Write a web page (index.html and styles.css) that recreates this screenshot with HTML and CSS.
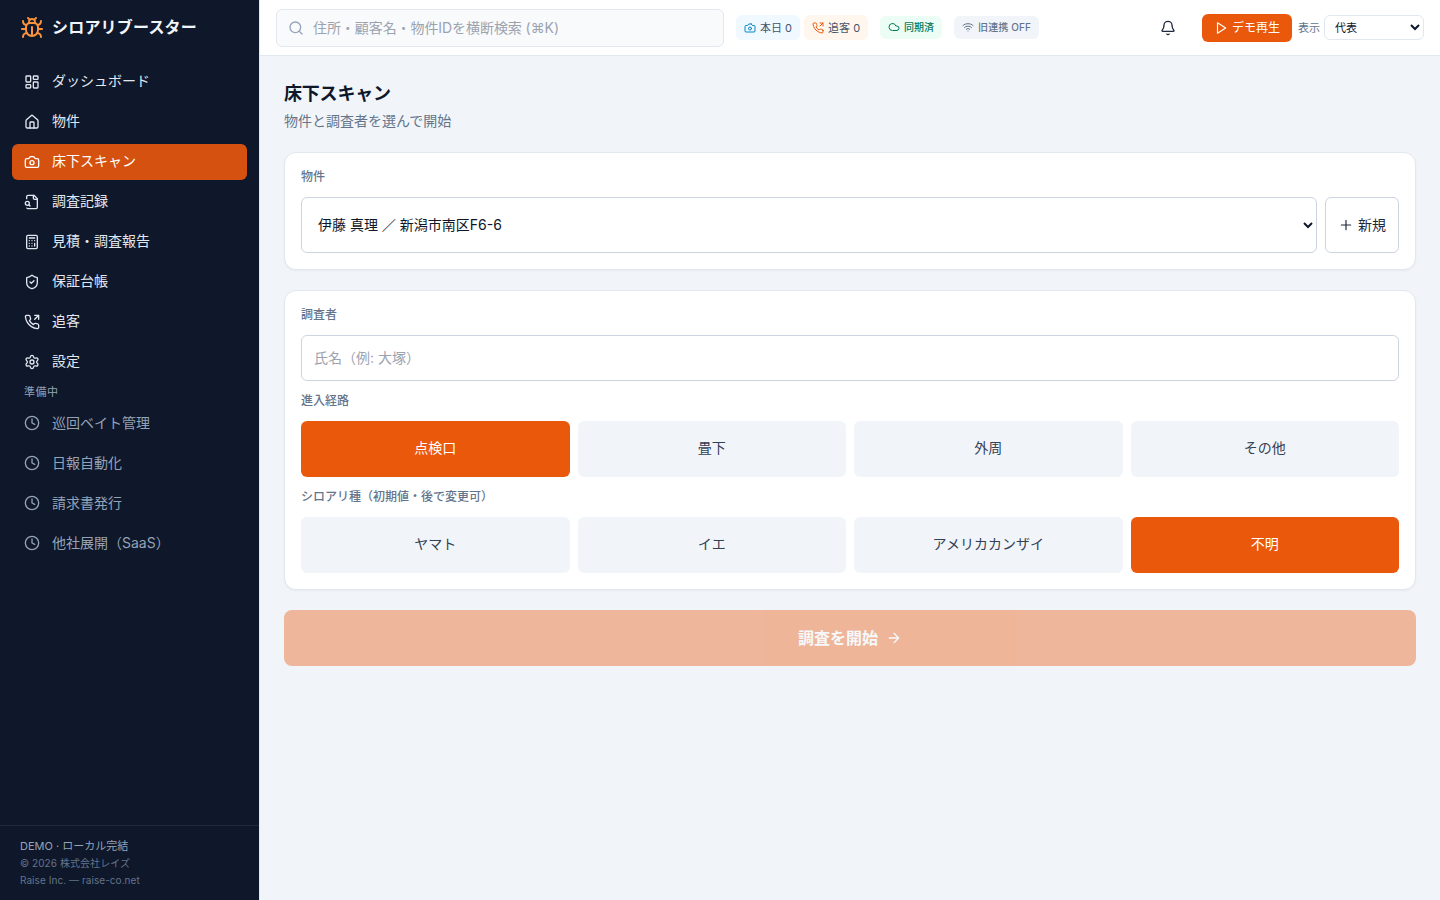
FILE: index.html
```html
<!DOCTYPE html>
<html lang="ja">
<head>
    <meta charset="UTF-8">
    <meta name="viewport" content="width=device-width, initial-scale=1">
    <title>シロアリブースター</title>
    <link rel="stylesheet" href="styles.css">
</head>
<body>
    <!-- shared icons -->
    <svg class="sprite" width="0" height="0">
        <symbol id="i-camera" viewBox="0 0 24 24"><path d="M14.5 4h-5L7 7H4a2 2 0 0 0-2 2v9a2 2 0 0 0 2 2h16a2 2 0 0 0 2-2V9a2 2 0 0 0-2-2h-3l-2.5-3z"/><circle cx="12" cy="13" r="3"/></symbol>
        <symbol id="i-phone" viewBox="0 0 24 24"><path d="M22 8V2h-6M16 8l6-6"/><path d="M22 16.92v3a2 2 0 0 1-2.18 2 19.79 19.79 0 0 1-8.63-3.07 19.5 19.5 0 0 1-6-6 19.79 19.79 0 0 1-3.07-8.67A2 2 0 0 1 4.11 2h3a2 2 0 0 1 2 1.72 12.84 12.84 0 0 0 .7 2.81 2 2 0 0 1-.45 2.11L8.09 9.91a16 16 0 0 0 6 6l1.27-1.27a2 2 0 0 1 2.11-.45 12.84 12.84 0 0 0 2.81.7A2 2 0 0 1 22 16.92z"/></symbol>
        <symbol id="i-clock" viewBox="0 0 24 24"><circle cx="12" cy="12" r="10"/><path d="M12 6v6l4 2"/></symbol>
    </svg>

    <div class="app">
        <aside class="sidebar">
            <div class="brand">
                <svg class="icon brand-icon" viewBox="0 0 24 24"><path d="m8 2 1.88 1.88M14.12 3.88 16 2M9 7.13v-1a3.003 3.003 0 1 1 6 0v1"/><path d="M12 20c-3.3 0-6-2.7-6-6v-3a4 4 0 0 1 4-4h4a4 4 0 0 1 4 4v3c0 3.3-2.7 6-6 6M12 20v-9"/><path d="M6.53 9C4.6 8.8 3 7.1 3 5M6 13H2M3 21c0-2.1 1.7-3.9 3.8-4M20.97 5c0 2.1-1.6 3.8-3.5 4M22 13h-4M17.2 17c2.1.1 3.8 1.9 3.8 4"/></svg>
                <span>シロアリブースター</span>
            </div>
            <nav class="nav nav-main">
                <a class="nav-item" href="#">
                    <svg class="icon" viewBox="0 0 24 24"><rect x="3" y="3" width="7" height="9" rx="1"/><rect x="14" y="3" width="7" height="5" rx="1"/><rect x="14" y="12" width="7" height="9" rx="1"/><rect x="3" y="16" width="7" height="5" rx="1"/></svg>
                    <span>ダッシュボード</span>
                </a>
                <a class="nav-item" href="#">
                    <svg class="icon" viewBox="0 0 24 24"><path d="M15 21v-8a1 1 0 0 0-1-1h-4a1 1 0 0 0-1 1v8"/><path d="M3 10a2 2 0 0 1 .709-1.528l7-6a2 2 0 0 1 2.582 0l7 6A2 2 0 0 1 21 10v9a2 2 0 0 1-2 2H5a2 2 0 0 1-2-2z"/></svg>
                    <span>物件</span>
                </a>
                <a class="nav-item active" href="#">
                    <svg class="icon"><use href="#i-camera"/></svg>
                    <span>床下スキャン</span>
                </a>
                <a class="nav-item" href="#">
                    <svg class="icon" viewBox="0 0 24 24"><path d="M14 2v4a2 2 0 0 0 2 2h4"/><path d="M4.268 21a2 2 0 0 0 1.727 1H18a2 2 0 0 0 2-2V7l-5-5H6a2 2 0 0 0-2 2v3"/><path d="m9 18-1.5-1.5"/><circle cx="5" cy="14" r="3"/></svg>
                    <span>調査記録</span>
                </a>
                <a class="nav-item" href="#">
                    <svg class="icon" viewBox="0 0 24 24"><rect x="4" y="2" width="16" height="20" rx="2"/><path d="M8 6h8M16 14v4M16 10h.01M12 10h.01M8 10h.01M12 14h.01M8 14h.01M12 18h.01M8 18h.01"/></svg>
                    <span>見積・調査報告</span>
                </a>
                <a class="nav-item" href="#">
                    <svg class="icon" viewBox="0 0 24 24"><path d="M20 13c0 5-3.5 7.5-7.66 8.95a1 1 0 0 1-.67-.01C7.5 20.5 4 18 4 13V6a1 1 0 0 1 1-1c2 0 4.5-1.2 6.24-2.72a1.17 1.17 0 0 1 1.52 0C14.51 3.81 17 5 19 5a1 1 0 0 1 1 1z"/><path d="m9 12 2 2 4-4"/></svg>
                    <span>保証台帳</span>
                </a>
                <a class="nav-item" href="#">
                    <svg class="icon"><use href="#i-phone"/></svg>
                    <span>追客</span>
                </a>
                <a class="nav-item" href="#">
                    <svg class="icon" viewBox="0 0 24 24"><path d="M9.671 4.136a2.34 2.34 0 0 1 4.659 0 2.34 2.34 0 0 0 3.319 1.915 2.34 2.34 0 0 1 2.33 4.033 2.34 2.34 0 0 0 0 3.831 2.34 2.34 0 0 1-2.33 4.033 2.34 2.34 0 0 0-3.319 1.915 2.34 2.34 0 0 1-4.659 0 2.34 2.34 0 0 0-3.32-1.915 2.34 2.34 0 0 1-2.33-4.033 2.34 2.34 0 0 0 0-3.831A2.34 2.34 0 0 1 6.35 6.051a2.34 2.34 0 0 0 3.319-1.915"/><circle cx="12" cy="12" r="3"/></svg>
                    <span>設定</span>
                </a>
            </nav>
            <div class="nav-label">準備中</div>
            <nav class="nav nav-soon">
                <a class="nav-item"><svg class="icon"><use href="#i-clock"/></svg><span>巡回ベイト管理</span></a>
                <a class="nav-item"><svg class="icon"><use href="#i-clock"/></svg><span>日報自動化</span></a>
                <a class="nav-item"><svg class="icon"><use href="#i-clock"/></svg><span>請求書発行</span></a>
                <a class="nav-item"><svg class="icon"><use href="#i-clock"/></svg><span>他社展開（SaaS）</span></a>
            </nav>
            <div class="sidebar-footer">
                <p class="mode">DEMO · ローカル完結</p>
                <p>© 2026 株式会社レイズ</p>
                <p>Raise Inc. — raise-co.net</p>
            </div>
        </aside>

        <div class="page">
            <header class="topbar">
                <label class="search">
                    <svg class="icon" viewBox="0 0 24 24"><circle cx="11" cy="11" r="8"/><path d="m21 21-4.3-4.3"/></svg>
                    <input type="text" placeholder="住所・顧客名・物件IDを横断検索 (⌘K)">
                </label>
                <div class="chips">
                    <span class="chip chip-today"><svg class="icon"><use href="#i-camera"/></svg>本日 0</span>
                    <span class="chip chip-follow"><svg class="icon"><use href="#i-phone"/></svg>追客 0</span>
                </div>
                <span class="chip chip-small chip-sync"><svg class="icon" viewBox="0 0 24 24"><path d="M17.5 19H9a7 7 0 1 1 6.71-9h1.79a4.5 4.5 0 1 1 0 9Z"/></svg>同期済</span>
                <span class="chip chip-small chip-off"><svg class="icon" viewBox="0 0 24 24"><path d="M12 20h.01M2 8.82a15 15 0 0 1 20 0M5 12.859a10 10 0 0 1 14 0M8.5 16.429a5 5 0 0 1 7 0"/></svg>旧連携 OFF</span>
                <div class="topbar-right">
                    <button class="bell" aria-label="通知">
                        <svg class="icon" viewBox="0 0 24 24"><path d="M10.268 21a2 2 0 0 0 3.464 0"/><path d="M3.262 15.326A1 1 0 0 0 4 17h16a1 1 0 0 0 .74-1.673C19.41 13.956 18 12.499 18 8A6 6 0 0 0 6 8c0 4.499-1.411 5.956-2.738 7.326"/></svg>
                    </button>
                    <button class="demo">
                        <svg class="icon" viewBox="0 0 24 24"><path d="m6 3 14 9-14 9z"/></svg>デモ再生
                    </button>
                    <label class="role">表示
                        <select><option>代表</option></select>
                    </label>
                </div>
            </header>

            <main class="content">
                <div class="heading">
                    <h1>床下スキャン</h1>
                    <p>物件と調査者を選んで開始</p>
                </div>

                <section class="card">
                    <div class="field-label">物件</div>
                    <div class="property-row">
                        <select class="property"><option>伊藤 真理 ／ 新潟市南区F6-6</option></select>
                        <button class="add">
                            <svg class="icon" viewBox="0 0 24 24"><path d="M5 12h14M12 5v14"/></svg>新規
                        </button>
                    </div>
                </section>

                <section class="card">
                    <div class="field-label">調査者</div>
                    <input class="name" type="text" placeholder="氏名（例: 大塚）">
                    <div class="field-label">進入経路</div>
                    <div class="options">
                        <button class="option selected">点検口</button>
                        <button class="option">畳下</button>
                        <button class="option">外周</button>
                        <button class="option">その他</button>
                    </div>
                    <div class="field-label">シロアリ種（初期値・後で変更可）</div>
                    <div class="options">
                        <button class="option">ヤマト</button>
                        <button class="option">イエ</button>
                        <button class="option">アメリカカンザイ</button>
                        <button class="option selected">不明</button>
                    </div>
                </section>

                <button class="start" disabled>
                    調査を開始
                    <svg class="icon" viewBox="0 0 24 24"><path d="M5 12h14M12 5l7 7-7 7"/></svg>
                </button>
            </main>
        </div>
    </div>
</body>
</html>
```
FILE: styles.css
```css
* {
    box-sizing: border-box;
}
body {
    margin: 0;
    font-family: Inter, "Noto Sans CJK JP", sans-serif;
    font-size: 14px;
    line-height: 20px;
    color: #0f172a;
    background: #f1f5f9;
}
button, input, select {
    font: inherit;
    color: inherit;
    margin: 0;
}
button {
    border: none;
    background: none;
    padding: 0;
    cursor: pointer;
}
h1, p {
    margin: 0;
}
.sprite {
    display: none;
}
.icon {
    width: 16px;
    height: 16px;
    flex-shrink: 0;
    fill: none;
    stroke: currentColor;
    stroke-width: 2;
    stroke-linecap: round;
    stroke-linejoin: round;
}
.app {
    display: flex;
    height: 100vh;
}

/* Sidebar */
.sidebar {
    width: 260px;
    flex-shrink: 0;
    display: flex;
    flex-direction: column;
    background: #0f172a;
    background-clip: padding-box;
    border-right: 1px solid #e2e8f0;
    color: #e2e8f0;
}
.brand {
    height: 56px;
    padding: 0 20px;
    display: flex;
    align-items: center;
    gap: 8px;
    font-size: 16px;
    font-weight: 600;
    letter-spacing: 0.2px;
    color: #f1f5f9;
}
.brand span {
    padding-bottom: 2px;
}
.brand-icon {
    width: 24px;
    height: 24px;
    color: #fb923c;
}
.nav {
    display: flex;
    flex-direction: column;
    gap: 4px;
    padding: 8px 12px 0;
}
.nav-item {
    height: 36px;
    padding: 0 12px;
    display: flex;
    align-items: center;
    gap: 12px;
    border-radius: 6px;
    color: inherit;
    text-decoration: none;
}
.nav-main span {
    padding-bottom: 2px;
}
.nav-item.active {
    background: rgba(234, 88, 12, 0.9);
    color: #fff;
}
.nav-label {
    padding: 4px 24px 0;
    height: 25px;
    font-size: 11px;
    line-height: 16px;
    letter-spacing: 0.5px;
    color: #94a3b8;
}
.nav-soon {
    padding-top: 0;
    color: #94a3b8;
}
.sidebar-footer {
    margin-top: auto;
    height: 75px;
    padding: 11px 20px;
    border-top: 1px solid #1e293b;
    font-size: 10px;
    line-height: 17px;
    letter-spacing: 0.06px;
    color: #64748b;
}
.sidebar-footer .mode {
    font-size: 11px;
    line-height: 18px;
    letter-spacing: 0;
    color: #94a3b8;
}

/* Top bar */
.page {
    flex: 1;
    min-width: 0;
    display: flex;
    flex-direction: column;
}
.topbar {
    height: 56px;
    flex-shrink: 0;
    padding: 0 16px;
    display: flex;
    align-items: center;
    gap: 12px;
    background: #fff;
    border-bottom: 1px solid #e2e8f0;
}
.search {
    width: 448px;
    height: 38px;
    padding: 0 12px 0 11px;
    display: flex;
    align-items: center;
    gap: 9px;
    border: 1px solid #e2e8f0;
    border-radius: 6px;
    background: #f8fafc;
    color: #94a3b8;
}
.search input {
    flex: 1;
    padding: 0;
    border: none;
    outline: none;
    background: none;
    letter-spacing: -0.07px;
}
input::placeholder {
    color: #9ca3af;
}
.chips {
    display: flex;
    gap: 4px;
}
.chip {
    height: 25px;
    padding: 0 8px;
    display: flex;
    align-items: center;
    gap: 4px;
    border-radius: 6px;
    font-size: 11px;
    white-space: nowrap;
    color: #475569;
}
.chip .icon {
    width: 12px;
    height: 12px;
}
.chip-today {
    background: #f0f9ff;
}
.chip-today .icon {
    color: #0284c7;
}
.chip-follow {
    background: #fff7ed;
}
.chip-follow .icon {
    color: #ea580c;
}
.chip-small {
    height: 23px;
    padding-bottom: 1px;
    font-size: 10px;
    font-weight: 500;
}
.chip-sync {
    background: #ecfdf5;
    color: #047857;
}
.chip-off {
    background: #f1f5f9;
    color: #64748b;
    letter-spacing: 0.1px;
}
.topbar-right {
    margin-left: auto;
    display: flex;
    align-items: center;
}
.bell {
    padding: 8px;
    margin-right: 18px;
    display: flex;
    color: #1e293b;
}
.demo {
    height: 28px;
    padding: 0 12px;
    margin-right: 6px;
    display: flex;
    align-items: center;
    gap: 4px;
    border-radius: 6px;
    background: #ea580c;
    color: #fff;
    font-size: 12px;
}
.demo .icon {
    width: 14px;
    height: 14px;
}
.role {
    display: flex;
    align-items: center;
    gap: 4px;
    font-size: 11px;
    color: #64748b;
}
.role select {
    width: 100px;
    height: 25px;
    padding: 0 6px;
    border: 1px solid #e2e8f0;
    border-radius: 6px;
    background: #fff;
    color: #0f172a;
}

/* Content */
.content {
    padding: 24px;
    display: flex;
    flex-direction: column;
    gap: 20px;
}
.heading h1 {
    font-size: 18px;
    line-height: 28px;
    font-weight: 700;
    letter-spacing: -0.2px;
}
.heading p {
    margin-top: 3px;
    padding-bottom: 1px;
    color: #64748b;
}
.card {
    padding: 16px;
    display: flex;
    flex-direction: column;
    gap: 12px;
    background: #fff;
    border: 1px solid #e2e8f0;
    border-radius: 12px;
    box-shadow: 0 1px 2px rgba(15, 23, 42, 0.05);
}
.field-label {
    font-size: 12px;
    line-height: 16px;
    font-weight: 500;
    color: #64748b;
}
.property-row {
    display: flex;
    gap: 8px;
}
.property {
    flex: 1;
    height: 56px;
    padding: 0 12px 1px;
    border: 1px solid #cbd5e1;
    border-radius: 6px;
    background: #fff;
}
.add {
    width: 74px;
    display: flex;
    align-items: center;
    justify-content: center;
    gap: 4px;
    border: 1px solid #cbd5e1;
    border-radius: 6px;
    color: #1e293b;
}
.add .icon {
    stroke-width: 1.75;
}
.name {
    height: 46px;
    padding: 0 12px 2px;
    border: 1px solid #cbd5e1;
    border-radius: 6px;
    background: #fff;
}
.options {
    display: grid;
    grid-template-columns: repeat(4, 1fr);
    gap: 8px;
}
.option {
    height: 56px;
    padding-bottom: 2px;
    border-radius: 6px;
    background: #f1f5f9;
    color: #334155;
}
.option.selected {
    background: #ea580c;
    color: #fff;
}
.start {
    height: 56px;
    display: flex;
    align-items: center;
    justify-content: center;
    gap: 8px;
    border-radius: 8px;
    background: #ea580c;
    color: #fff;
    font-size: 16px;
    font-weight: 600;
    opacity: 0.4;
    cursor: default;
}
```
